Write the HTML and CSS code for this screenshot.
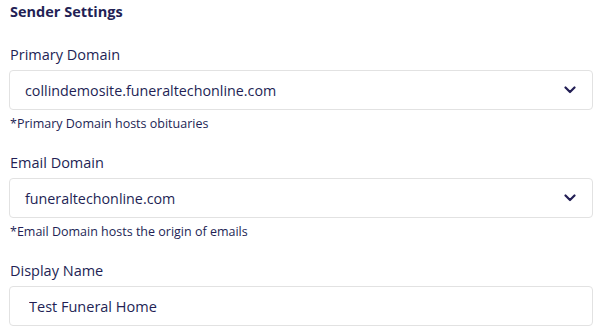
FILE: index.html
```html
<!DOCTYPE html>
<html lang="en">
<head>
    <meta charset="UTF-8">
    <meta name="viewport" content="width=device-width, initial-scale=1.0">
    <title>Sender Settings</title>
    <link rel="stylesheet" href="styles.css">
</head>
<body>
    <!-- Sender settings form -->
    <div class="sender-settings">
        <h3 class="section-title">Sender Settings</h3>

        <div class="field">
            <label class="field-label">Primary Domain</label>
            <div class="select-box">
                <span class="select-value">collindemosite.funeraltechonline.com</span>
                <svg class="chevron" width="12" height="8" viewBox="0 0 12 8">
                    <path d="M1.5 1.5 L6 6 L10.5 1.5" fill="none" stroke="#231f55" stroke-width="2.2" stroke-linecap="round" stroke-linejoin="round"/>
                </svg>
            </div>
            <p class="field-help">*Primary Domain hosts obituaries</p>
        </div>

        <div class="field">
            <label class="field-label">Email Domain</label>
            <div class="select-box">
                <span class="select-value">funeraltechonline.com</span>
                <svg class="chevron" width="12" height="8" viewBox="0 0 12 8">
                    <path d="M1.5 1.5 L6 6 L10.5 1.5" fill="none" stroke="#231f55" stroke-width="2.2" stroke-linecap="round" stroke-linejoin="round"/>
                </svg>
            </div>
            <p class="field-help">*Email Domain hosts the origin of emails</p>
        </div>

        <div class="field">
            <label class="field-label">Display Name</label>
            <input class="text-input" type="text" value="Test Funeral Home">
        </div>
    </div>
</body>
</html>
```

FILE: styles.css
```css
/* General */
body {
    margin: 0;
    font-family: "Open Sans", "Noto Sans", sans-serif;
    color: #231f55;
    background-color: #fff;
}

.sender-settings {
    padding: 1px 7px 0 9px;
}

/* Heading */
.section-title {
    margin: 0 0 22px 1px;
    font-size: 14.5px;
    font-weight: 700;
    line-height: 22px;
}

/* Fields */
.field {
    margin-bottom: 20px;
}

.field-label {
    display: block;
    margin: 0 0 5px 1px;
    font-size: 14.5px;
    line-height: 20px;
}

.select-box {
    display: flex;
    align-items: center;
    justify-content: space-between;
    height: 40px;
    box-sizing: border-box;
    padding: 0 16px 0 15px;
    border: 1px solid #e2e2e2;
    border-radius: 4px;
    background-color: #fff;
}

.select-value {
    font-size: 14.3px;
}

.chevron {
    display: block;
}

.field-help {
    margin: 5px 0 0 1px;
    font-size: 12.5px;
    line-height: 18px;
}

.text-input {
    display: block;
    width: 100%;
    height: 40px;
    box-sizing: border-box;
    padding: 0 19px;
    border: 1px solid #e2e2e2;
    border-radius: 4px;
    font-family: inherit;
    font-size: 14.5px;
    color: #231f55;
    outline: none;
}
```
